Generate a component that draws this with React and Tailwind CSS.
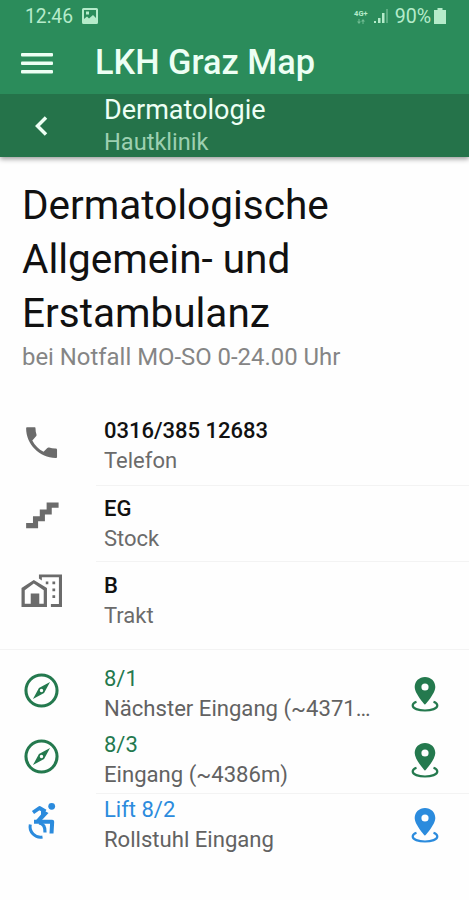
import clsx from 'clsx'

const PHONE = 'M6.62 10.79c1.44 2.83 3.76 5.14 6.59 6.59l2.2-2.2c.27-.27.67-.36 1.02-.24 1.12.37 2.33.57 3.57.57.8 0 1.100.2 1.100.9V20.300c0 .5-.2.7-.8.7-9.39 0-17.300-7.900-17.300-17.300 0-.5.2-.7.7-.7h4.100c.6 0 .7.3.7.8 0 1.25.2 2.45.57 3.57.11.35.03.74-.25 1.02z'
const STAIRS = 'M15 5v4h-4v4H7v4H3v3h7v-4h4v-4h4V8h4V5z'
const COMPASS = 'M7 17l3.5-6.500L17 7l-3.5 6.500L7 17m5-6a1 1 0 0 0-1 1 1 1 0 0 0 1 1 1 1 0 0 0 1-1 1 1 0 0 0-1-1M12 2a10 10 0 0 1 10 10 10 10 0 0 1-10 10A10 10 0 0 1 2 12 10 10 0 0 1 12 2m0 1.800a8.200 8.200 0 0 0-8.200 8.200 8.200 8.200 0 0 0 8.200 8.200 8.200 8.200 0 0 0 8.200-8.200 8.200 8.200 0 0 0-8.200-8.200z'
const HOME_CITY = 'M10.500 2v2.400l1.700 1.200V3.700h10v15.600H17.500V21H24V2zM7.500 5.200L.3 10v11h14.900V10zM14.500 6.200v1.500H16V6.200zm3.900 0v1.600H20V6.200zM7.500 7.300L13.300 11.200v8h-2.600v-6h-5v6H2.200v-8zM18.400 10.200v1.600H20v-1.600zm0 4v1.600H20v-1.600z'

const details = [
  { title: '0316/385 12683', label: 'Telefon', icon: PHONE, row: 'h-[77px]', iconPos: 'mt-[14px]' },
  { title: 'EG', label: 'Stock', icon: STAIRS, row: 'h-[76px]', iconPos: 'mt-[9px]' },
  { title: 'B', label: 'Trakt', icon: HOME_CITY, row: 'h-[78px]', iconPos: 'mt-[10px]' },
]

const entrances = [
  { title: '8/1', label: 'Nächster Eingang (~4371…', color: 'text-[#24794e]' },
  { title: '8/3', label: 'Eingang (~4386m)', color: 'text-[#24794e]' },
  { title: 'Lift 8/2', label: 'Rollstuhl Eingang', color: 'text-[#2b8bdd]', lift: true },
]

function Icon({ path, className }) {
  return (
    <svg viewBox="0 0 24 24" fill="currentColor" className={clsx('size-[41px] shrink-0', className)}>
      <path fillRule="evenodd" d={path} />
    </svg>
  )
}

function WheelchairIcon({ className }) {
  return (
    <svg viewBox="0 0 41 41" fill="none" stroke="currentColor" className={clsx('size-[41px] shrink-0', className)}>
      <circle cx="30.700" cy="5.300" r="3.400" fill="currentColor" stroke="none" />
      <path d="M12 11.500L18.500 7l6 3.500" strokeWidth="3.800" strokeLinejoin="round" />
      <path d="M20 8l7.500 4L21 19l-8 2.500 7-8z" fill="currentColor" stroke="none" />
      <path d="M13 20.700h18.200L30.500 32.500" strokeWidth="4" strokeLinejoin="round" />
      <path d="M18 22q6.500 1 6 9.500" strokeWidth="3.200" />
      <path d="M9.300 23.500a10.500 10.500 0 0 0 12.200 12.500" strokeWidth="3" />
    </svg>
  )
}

function PinIcon() {
  return (
    <svg viewBox="0 0 28 38" fill="currentColor" className="h-[38px] w-7 shrink-0">
      <path fillRule="evenodd" d="M14 1C8.2 1 3.700 5.300 3.700 11c0 6.800 10.300 17.700 10.300 17.700S24.300 17.800 24.300 11C24.300 5.300 19.800 1 14 1zm0 6.400a3.600 3.600 0 1 1 0 7.200 3.600 3.600 0 0 1 0-7.200z" />
      <path d="M5.500 25.800C2.500 26.800 1.700 28.300 1.700 29.500c0 3 5.600 5 12.300 5s12.300-2 12.300-5c0-1.200-.8-2.700-3.800-3.700" fill="none" stroke="currentColor" strokeWidth="2.200" />
    </svg>
  )
}

function StatusBar() {
  return (
    <div className="flex h-8 items-center justify-between pl-[25px] pr-[23px] text-[#b5ebca]">
      <div className="flex items-center gap-[9px]">
        <span className="text-[19.3px] leading-[33px]">12:46</span>
        <svg viewBox="0 0 16 16" className="size-4" fill="currentColor">
          <path fillRule="evenodd" d="M1.500 0h13Q16 0 16 1.500v13q0 1.500-1.500 1.500h-13Q0 16 0 14.500v-13Q0 0 1.500 0zM2 2v9l3-2.500 2 2L11 7l3 3V2zM4 3.500h3v3H4z" />
        </svg>
      </div>
      <div className="flex items-center">
        <div className="mr-[6px] flex flex-col items-center gap-px">
          <span className="text-[7.5px] font-bold leading-[9px]">4G+</span>
          <svg viewBox="0 0 8 5" className="h-[5px] w-2 opacity-50" fill="currentColor">
            <path d="M0 2.500h1.500V0h1v2.500H4L2 5zM4 2.500L6 0l2 2.500H6.500V5h-1V2.500z" />
          </svg>
        </div>
        <svg viewBox="0 0 14 14" className="mr-[7px] size-[14px]" fill="currentColor">
          <path d="M0 12h2v2H0zM4 9h2.500v5H4zM8 4h2.500v10H8z" />
          <path opacity=".35" d="M12 0h2v14h-2z" />
        </svg>
        <span className="text-[19.6px] leading-[33px]">90%</span>
        <svg viewBox="0 0 12 16" className="ml-[3px] h-4 w-3" fill="currentColor">
          <path d="M3.500 0h5v2H12v14H0V2h3.500z" />
        </svg>
      </div>
    </div>
  )
}

export default function App() {
  return (
    <div className="h-[900px] w-[469px] overflow-hidden bg-[#fefefe] font-[Roboto,sans-serif] text-[#111]">
      <header className="bg-[#2b8c5b] text-[#edfff4] shadow-[0_2px_5px_rgba(0,0,0,0.4)]">
        <StatusBar />
        <div className="flex h-[62px] items-center pl-[21px]">
          <svg viewBox="0 0 32 22" className="h-[22px] w-8" fill="currentColor">
            <rect y="1" width="32" height="3.400" rx="1" />
            <rect y="9.500" width="32" height="3.400" rx="1" />
            <rect y="18" width="32" height="3.400" rx="1" />
          </svg>
          <h1 className="ml-[42px] pb-[2px] text-[34.3px] font-medium leading-[60px]">LKH Graz Map</h1>
        </div>
        <div className="flex h-[63px] items-center bg-[#25734a] pl-[34px]">
          <svg viewBox="0 0 14 20" className="h-5 w-[14px]" fill="none" stroke="currentColor" strokeWidth="3.500">
            <path d="M12 1.500L3.500 10l8.500 8.500" />
          </svg>
          <div className="ml-14 pt-px">
            <p className="text-[27px] leading-8">Dermatologie</p>
            <p className="text-[23.6px] leading-[33px] text-[#9dd0b1]">Hautklinik</p>
          </div>
        </div>
      </header>

      <section className="h-[251px] px-[22px] pt-[21px]">
        <h2 className="w-[330px] text-[40.5px] leading-[54px]">Dermatologische Allgemein- und Erstambulanz</h2>
        <p className="text-[23.9px] leading-[35px] text-[#858585]">bei Notfall MO-SO 0-24.00 Uhr</p>
      </section>

      <ul className="h-[242px] border-b border-[#f3f3f3]">
        {details.map((item, i) => (
          <li key={item.title} className={clsx('flex pl-[21px]', item.row)}>
            <Icon path={item.icon} className={clsx('text-[#6b6b6b]', item.iconPos)} />
            <div className={clsx('ml-[34px] flex-1 pl-2', i > 0 && 'border-t border-[#f3f3f3]')}>
              <p className={clsx('text-[22px] font-medium leading-[30px]', i === 2 ? 'mt-[9px]' : 'mt-2')}>{item.title}</p>
              <p className="text-[22px] leading-[30px] text-[#6b6b6b]">{item.label}</p>
            </div>
          </li>
        ))}
      </ul>

      <ul className="pt-[12px]">
        {entrances.map((item) => (
          <li key={item.title} className="flex h-[65.5px] pl-[21px]">
            {item.lift ? (
              <WheelchairIcon className={clsx('mt-2', item.color)} />
            ) : (
              <Icon path={COMPASS} className={clsx('mt-2', item.color)} />
            )}
            <div className={clsx('ml-[34px] flex flex-1 justify-between pl-2 pr-[30px]', item.lift && 'border-t border-[#f3f3f3]')}>
              <div className={item.lift ? 'pt-px' : 'pt-[2px]'}>
                <p className={clsx('text-[22px] leading-[30px]', item.color)}>{item.title}</p>
                <p className="whitespace-nowrap text-[22.1px] leading-[28px] text-[#626262]">{item.label}</p>
              </div>
              <div className={clsx(item.lift ? 'pt-[13px]' : 'pt-[14px]', item.color)}>
                <PinIcon />
              </div>
            </div>
          </li>
        ))}
      </ul>
    </div>
  )
}
